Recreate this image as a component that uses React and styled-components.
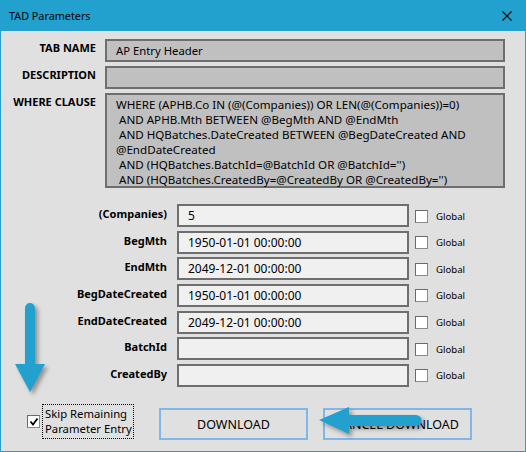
import React from 'react';
import styled, { createGlobalStyle } from 'styled-components';

const GlobalStyle = createGlobalStyle`
    html, body {
        margin: 0;
        padding: 0;
        background: #e0e0e0;
    }
    body {
        font-family: "Noto Sans", "Open Sans", sans-serif;
        color: #000;
    }
`;

const topFields = [
    { label: 'TAB NAME', value: 'AP Entry Header' },
    { label: 'DESCRIPTION', value: '' },
];

const whereLines = [
    'WHERE (APHB.Co IN (@(Companies)) OR LEN(@(Companies))=0)',
    ' AND APHB.Mth BETWEEN @BegMth AND @EndMth',
    ' AND HQBatches.DateCreated BETWEEN @BegDateCreated AND',
    '@EndDateCreated',
    " AND (HQBatches.BatchId=@BatchId OR @BatchId='')",
    " AND (HQBatches.CreatedBy=@CreatedBy OR @CreatedBy='')",
];

const params = [
    { name: '(Companies)', value: '5' },
    { name: 'BegMth', value: '1950-01-01 00:00:00' },
    { name: 'EndMth', value: '2049-12-01 00:00:00' },
    { name: 'BegDateCreated', value: '1950-01-01 00:00:00' },
    { name: 'EndDateCreated', value: '2049-12-01 00:00:00' },
    { name: 'BatchId', value: '' },
    { name: 'CreatedBy', value: '' },
];

function App() {
    return (
        <>
            <GlobalStyle />
            <Window>
                <TitleBar>
                    <span>TAD Parameters</span>
                    <CloseIcon viewBox="0 0 10 10" width="10" height="10">
                        <path d="M0.5 0.5 L9.5 9.5 M9.5 0.5 L0.5 9.5" stroke="#000" strokeWidth="1.1" fill="none" />
                    </CloseIcon>
                </TitleBar>
                <Body>
                    <TopGrid>
                        {topFields.map(f => (
                            <React.Fragment key={f.label}>
                                <TopLabel>{f.label}</TopLabel>
                                <ReadBox>{f.value}</ReadBox>
                            </React.Fragment>
                        ))}
                        <TopLabel>WHERE CLAUSE</TopLabel>
                        <WhereBox>
                            {whereLines.map((line, i) => (
                                <div key={i}>{line}</div>
                            ))}
                        </WhereBox>
                    </TopGrid>

                    <ParamGrid>
                        {params.map(p => (
                            <React.Fragment key={p.name}>
                                <ParamLabel>{p.name}</ParamLabel>
                                <ParamInput>{p.value}</ParamInput>
                                <CheckBox />
                                <GlobalText>Global</GlobalText>
                            </React.Fragment>
                        ))}
                    </ParamGrid>

                    <Footer>
                        <SkipGroup>
                            <CheckBox $checked>
                                <svg viewBox="0 0 10 10" width="10" height="10">
                                    <path d="M1.5 4.5 L4 7.5 L8.5 1.5" stroke="#000" strokeWidth="1.8" fill="none" />
                                </svg>
                            </CheckBox>
                            <FocusLabel>
                                Skip Remaining
                                <br />
                                Parameter Entry
                            </FocusLabel>
                        </SkipGroup>
                        <Button>DOWNLOAD</Button>
                        <Button>CANCEL DOWNLOAD</Button>
                    </Footer>
                </Body>

                <DownArrow viewBox="0 0 40 100" width="40" height="100">
                    <path d="M14 10 a5 5 0 0 1 10 0 L24 66 L34 66 L19 94 L4 66 L14 66 Z" fill="#22a1cf" />
                </DownArrow>
                <LeftArrow viewBox="0 0 120 40" width="120" height="40">
                    <path d="M8 20 L38 7 L38 15 L105 15 a5.5 5.5 0 0 1 0 11 L38 26 L38 34 Z" fill="#22a1cf" />
                </LeftArrow>
            </Window>
        </>
    );
}

const Window = styled.div`
    position: relative;
    width: 526px;
    height: 452px;
    box-sizing: border-box;
    border: 1px solid #22a1cf;
    border-top: none;
    background: #e0e0e0;
    display: flex;
    flex-direction: column;
    overflow: hidden;
`;

const TitleBar = styled.div`
    height: 31px;
    background: #22a1cf;
    display: flex;
    align-items: center;
    justify-content: space-between;
    padding: 0 13px 0 8px;
    font-size: 10.8px;
    flex-shrink: 0;
`;

const CloseIcon = styled.svg`
    display: block;
`;

const Body = styled.div`
    padding: 8px 19px 0 7px;
    display: flex;
    flex-direction: column;
`;

const TopGrid = styled.div`
    display: grid;
    grid-template-columns: 88px 400px;
    column-gap: 9px;
    row-gap: 4px;
`;

const TopLabel = styled.div`
    font-size: 11px;
    font-weight: 700;
    text-align: right;
    line-height: 15px;
    padding-top: 1px;
    white-space: nowrap;
`;

const ReadBox = styled.div`
    height: 23px;
    box-sizing: border-box;
    background: #c0c0c0;
    border: 2px solid #6e6e6e;
    padding: 0 9px;
    font-size: 11.3px;
    line-height: 19px;
`;

const WhereBox = styled(ReadBox)`
    height: 95px;
    padding-top: 2px;
    font-size: 11.6px;
    line-height: 15px;
    white-space: pre;
`;

const ParamGrid = styled.div`
    display: grid;
    grid-template-columns: 159px 232px 13px auto;
    column-gap: 10px;
    row-gap: 3.67px;
    align-items: center;
    margin-top: 16px;

    & > :nth-child(4n + 3) {
        margin-left: -4px;
    }
    & > :nth-child(4n) {
        margin-left: -6px;
    }
`;

const ParamLabel = styled.div`
    font-size: 11px;
    font-weight: 700;
    text-align: right;
    line-height: 15px;
    align-self: start;
    padding-top: 2px;
`;

const ParamInput = styled.div`
    height: 23px;
    box-sizing: border-box;
    background: #f0f0f0;
    border: 2px solid #6e6e6e;
    padding: 0 9px;
    font-size: 12px;
    line-height: 19px;
`;

const CheckBox = styled.span`
    width: 13px;
    height: 13px;
    box-sizing: border-box;
    background: #fff;
    border: 1px solid #8a8a8a;
    border-top-color: #6a6a6a;
    border-left-color: #6a6a6a;
    display: inline-flex;
    align-items: center;
    justify-content: center;
    flex-shrink: 0;
    margin-top: ${p => (p.$checked ? '0' : '1px')};
`;

const GlobalText = styled.span`
    font-size: 9.6px;
    line-height: 15px;
    padding-top: 1px;
`;

const Footer = styled.div`
    display: flex;
    align-items: center;
    margin-top: 21px;
    padding-left: 19px;
`;

const SkipGroup = styled.div`
    display: flex;
    align-items: center;
    gap: 2px;
    width: 132px;
    margin-top: -4px;
`;

const FocusLabel = styled.div`
    border: 1px dotted #000;
    padding: 1px 1px 2px 2px;
    font-size: 11.3px;
    line-height: 15px;
    width: 92px;
    box-sizing: border-box;
    white-space: nowrap;
`;

const Button = styled.div`
    width: 149px;
    height: 32px;
    box-sizing: border-box;
    border: 2px solid #7fb7ea;
    display: flex;
    align-items: center;
    justify-content: center;
    font-size: 12.5px;
    padding-top: 1px;
    & + & {
        margin-left: 15px;
    }
`;

const DownArrow = styled.svg`
    position: absolute;
    left: 10px;
    top: 298px;
    filter: drop-shadow(3px 3px 2px rgba(0, 0, 0, 0.35));
`;

const LeftArrow = styled.svg`
    position: absolute;
    left: 310px;
    top: 400px;
    filter: drop-shadow(3px 3px 2px rgba(0, 0, 0, 0.35));
`;

export default App;
